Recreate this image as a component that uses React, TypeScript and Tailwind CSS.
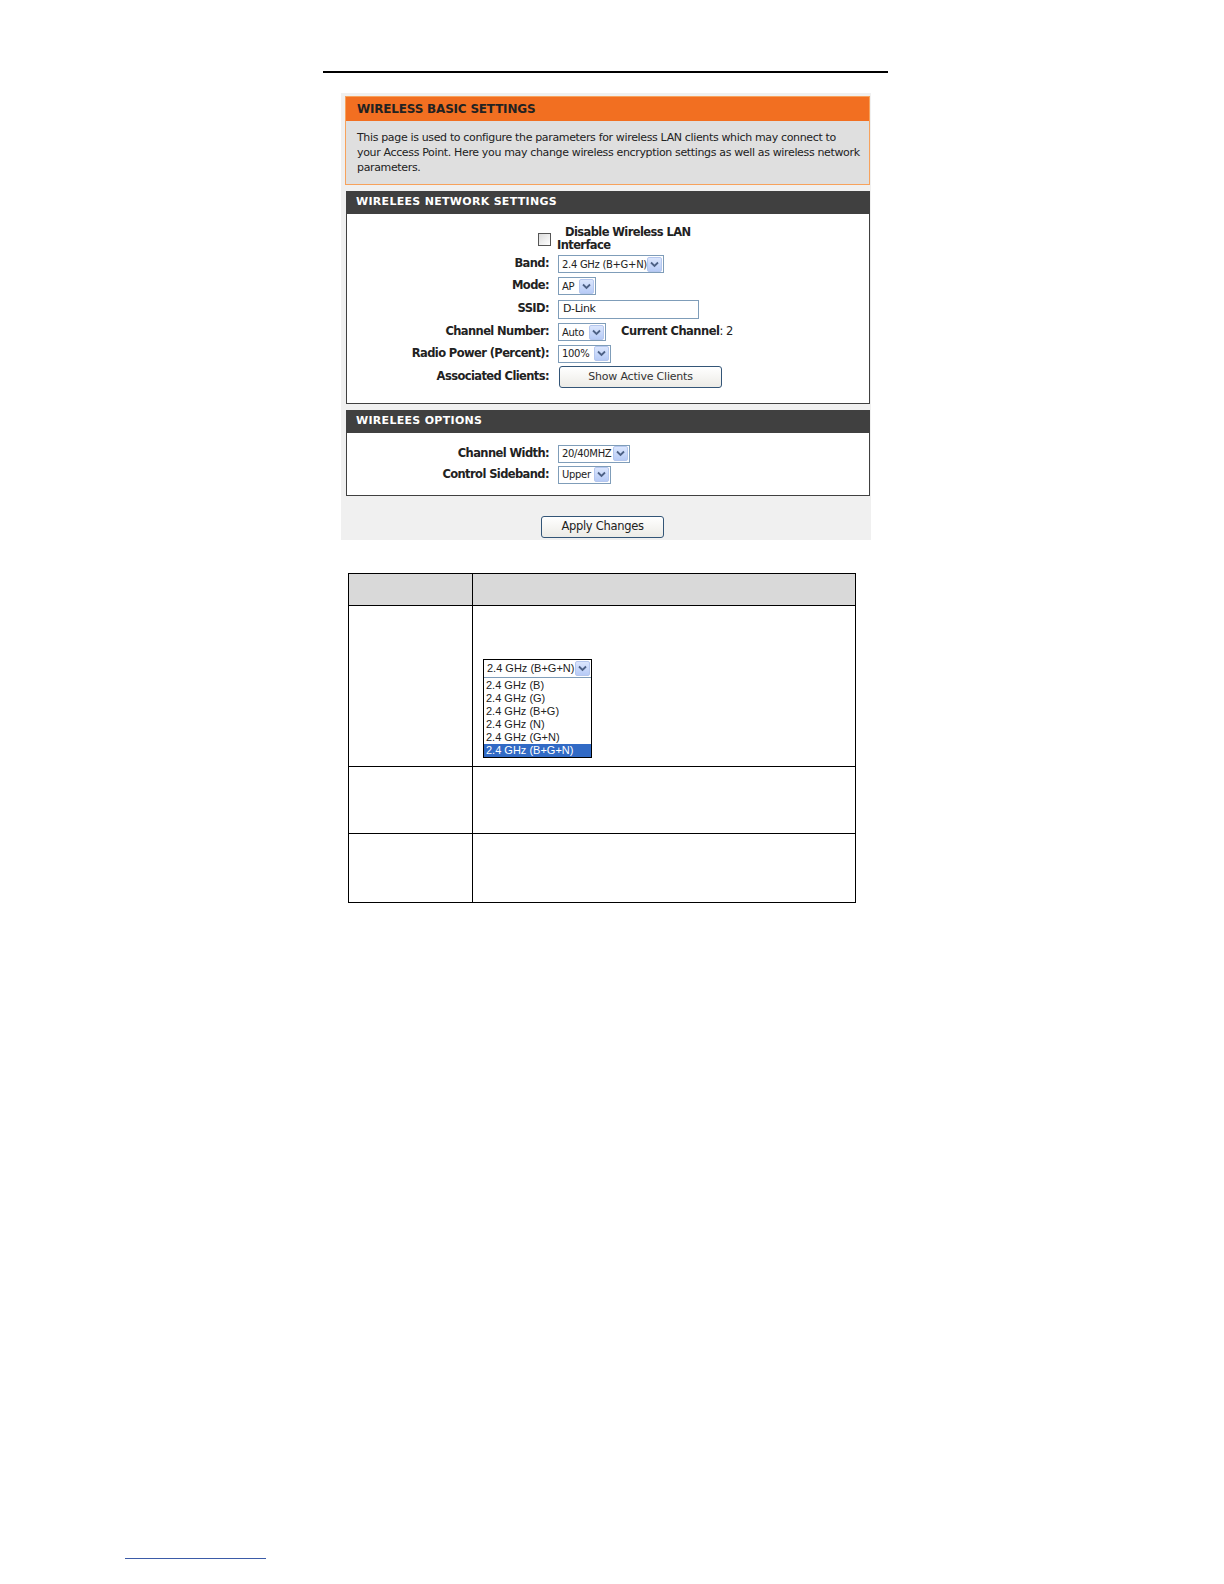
import React from "react";

const font = { fontFamily: '"DejaVu Sans", Verdana, sans-serif' };

function Arrow() {
  return (
    <span className="flex h-[15px] w-[15px] items-center justify-center rounded-[2px] border border-[#b5c7ee] bg-gradient-to-b from-[#dbe6fd] to-[#b7cbf6]">
      <svg width="9" height="7" viewBox="0 0 9 7">
        <path d="M1 1.5 L4.5 5 L8 1.5" fill="none" stroke="#4d6185" strokeWidth="1.8" />
      </svg>
    </span>
  );
}

function Select({ value, width }: { value: string; width: string }) {
  return (
    <div className={`flex h-[18px] items-center justify-between border border-[#7f9db9] bg-white pl-[3px] pr-px text-[10px] text-[#222] ${width}`}>
      <span className="whitespace-nowrap tracking-[-0.3px]">{value}</span>
      <Arrow />
    </div>
  );
}

function Row({ label, h, children }: { label: string; h: string; children: React.ReactNode }) {
  return (
    <div className={`grid grid-cols-[202px_1fr] items-center gap-x-[9px] ${h}`}>
      <div className="whitespace-nowrap text-right text-[11.5px] font-bold tracking-[-0.6px] text-[#222]">{label}</div>
      <div className="flex items-center">{children}</div>
    </div>
  );
}

function DarkHeader({ title }: { title: string }) {
  return (
    <div className="flex h-[23px] items-center bg-[#404040] pl-[10px] text-[11px] font-bold tracking-[0.3px] text-white">
      {title}
    </div>
  );
}

const bands = ["2.4 GHz (B)", "2.4 GHz (G)", "2.4 GHz (B+G)", "2.4 GHz (N)", "2.4 GHz (G+N)"];

export default function App() {
  return (
    <div className="relative h-[1584px] w-[1224px] overflow-hidden bg-white" style={font}>
      <div className="ml-[323px] pt-[71px]">
        <div className="h-[2px] w-[565px] bg-black" />
      </div>

      {/* router page */}
      <div className="ml-[341px] mt-[20px] w-[530px] bg-[#f0f0f0] pb-[2px] pl-[4px] pr-px pt-[3px]">
        <div className="border border-[#f7a25c]">
          <div className="flex h-[24px] items-center bg-[#f26f21] pl-[11px] text-[12px] font-bold tracking-[-0.2px] text-[#222]">
            WIRELESS BASIC SETTINGS
          </div>
          <div className="h-[63px] whitespace-nowrap bg-[#dfdfdf] px-[11px] pt-[9px] text-[11px] leading-[15px] tracking-[-0.35px] text-[#222]">
            This page is used to configure the parameters for wireless LAN clients which may connect to
            <br />
            your Access Point. Here you may change wireless encryption settings as well as wireless network
            <br />
            parameters.
          </div>
        </div>

        <div className="ml-px mt-[6px]">
          <DarkHeader title="WIRELEES NETWORK SETTINGS" />
          <div className="border border-t-0 border-[#404040] bg-white pb-[13px] pt-[11px]">
            <div className="grid h-[28px] grid-cols-[202px_1fr] items-center gap-x-[9px]">
              <div className="flex justify-end">
                <span className="mr-[-2px] h-[13px] w-[13px] border border-[#555] bg-gradient-to-br from-[#dcdcdc] to-white" />
              </div>
              <div className="text-[11.5px] font-bold leading-[13px] tracking-[-0.6px] text-[#222]">
                <div className="pl-[7px]">Disable Wireless LAN</div>
                <div className="-ml-px">Interface</div>
              </div>
            </div>
            <Row label="Band:" h="h-[22px]">
              <Select value="2.4 GHz (B+G+N)" width="w-[106px]" />
            </Row>
            <Row label="Mode:" h="h-[22px]">
              <Select value="AP" width="w-[38px]" />
            </Row>
            <Row label="SSID:" h="h-[24px]">
              <div className="flex h-[19px] w-[141px] items-center border border-[#7f9db9] bg-white pl-[4px] text-[11px] tracking-[-0.4px] text-[#222]">
                D-Link
              </div>
            </Row>
            <Row label="Channel Number:" h="h-[22px]">
              <Select value="Auto" width="w-[48px]" />
              <span className="ml-[15px] text-[11.5px] tracking-[-0.5px] text-[#222]">
                <b>Current Channel</b>: 2
              </span>
            </Row>
            <Row label="Radio Power (Percent):" h="h-[21px]">
              <Select value="100%" width="w-[53px]" />
            </Row>
            <Row label="Associated Clients:" h="h-[26px]">
              <button className="ml-px flex h-[22px] w-[163px] items-center justify-center rounded-[3px] border border-[#335577] bg-gradient-to-b from-white to-[#ecebe6] text-[11px] tracking-[-0.2px] text-[#333]">
                Show Active Clients
              </button>
            </Row>
          </div>
        </div>

        <div className="ml-px mt-[6px]">
          <DarkHeader title="WIRELEES OPTIONS" />
          <div className="border border-t-0 border-[#404040] bg-white pb-[10px] pt-[10px]">
            <Row label="Channel Width:" h="h-[21px]">
              <Select value="20/40MHZ" width="w-[72px]" />
            </Row>
            <Row label="Control Sideband:" h="h-[21px]">
              <Select value="Upper" width="w-[53px]" />
            </Row>
          </div>
        </div>

        <div className="flex justify-center pr-[10px] pt-[20px]">
          <button className="flex h-[22px] w-[123px] items-center justify-center rounded-[3px] border border-[#335577] bg-gradient-to-b from-white to-[#ecebe6] text-[11.5px] tracking-[-0.3px] text-[#222]">
            Apply Changes
          </button>
        </div>
      </div>

      {/* description table */}
      <div className="ml-[348px] mt-[33px] w-[508px] border border-black">
        <div className="grid h-[32px] grid-cols-[124px_1fr] border-b border-black bg-[#d9d9d9]">
          <div className="border-r border-black" />
          <div />
        </div>
        <div className="grid h-[161px] grid-cols-[124px_1fr] border-b border-black">
          <div className="border-r border-black" />
          <div className="pl-[10px] pt-[53px]">
            <div
              className="w-[109px] border border-black bg-white text-[11px] leading-[13px] text-[#222]"
              style={{ fontFamily: '"Liberation Sans", Arial, sans-serif' }}
            >
              <div className="flex h-[18px] items-center justify-between border-b border-[#7f9db9] pl-[3px] pr-px">
                <span>2.4 GHz (B+G+N)</span>
                <Arrow />
              </div>
              <div className="pt-[1px]">
                {bands.map((b) => (
                  <div key={b} className="pl-[2px]">
                    {b}
                  </div>
                ))}
                <div className="bg-[#316ac5] pl-[2px] text-white">2.4 GHz (B+G+N)</div>
              </div>
            </div>
          </div>
        </div>
        <div className="grid h-[67px] grid-cols-[124px_1fr] border-b border-black">
          <div className="border-r border-black" />
          <div />
        </div>
        <div className="grid h-[68px] grid-cols-[124px_1fr]">
          <div className="border-r border-black" />
          <div />
        </div>
      </div>

      <div className="absolute left-[125px] top-[1558px] h-px w-[141px] bg-[#3b5ba8]" />
    </div>
  );
}
